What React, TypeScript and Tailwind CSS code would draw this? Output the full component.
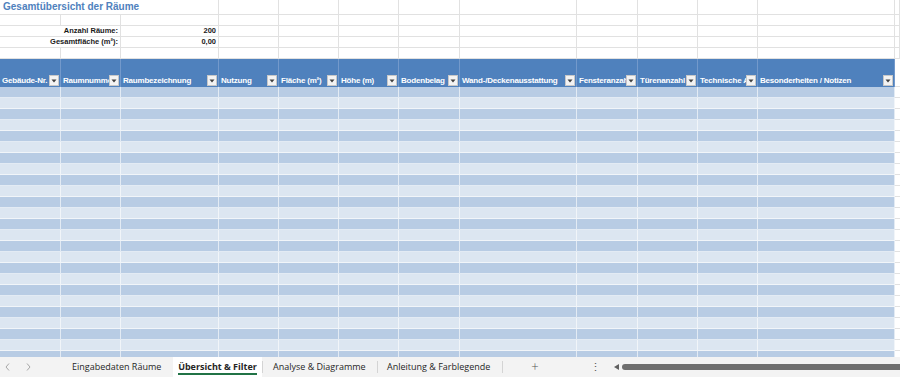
import React from 'react';

const cols = 'grid grid-cols-[61px_60px_98px_60px_60px_60px_61px_117px_61px_60px_60px_137px_5px]';

const headers = [
  'Gebäude-Nr.',
  'Raumnummer',
  'Raumbezeichnung',
  'Nutzung',
  'Fläche (m²)',
  'Höhe (m)',
  'Bodenbelag',
  'Wand-/Deckenausstattung',
  'Fensteranzahl',
  'Türenanzahl',
  'Technische Ausstattung',
  'Besonderheiten / Notizen',
];

function Blank({ span = '' }: { span?: string }) {
  return <div className={`border-r border-b border-[#e1e1e1] ${span}`} />;
}

function FilterButton() {
  return (
    <div className="shrink-0 w-[10px] h-[11px] mr-[1px] mb-[1px] bg-[#f3f3f3] border border-[#c8c8c8] flex items-center justify-center">
      <svg width="6" height="4" viewBox="0 0 6 4">
        <polygon points="0.5,0.5 5.5,0.5 3,3.5" fill="#404040" />
      </svg>
    </div>
  );
}

function Chevron({ dir }: { dir: 'left' | 'right' }) {
  return (
    <svg width="5" height="8" viewBox="0 0 5 8">
      <polyline
        points={dir === 'left' ? '4,0.5 1,4 4,7.5' : '1,0.5 4,4 1,7.5'}
        fill="none"
        stroke="#a6a6a6"
        strokeWidth="1"
      />
    </svg>
  );
}

export default function App() {
  const rows = Array.from({ length: 25 }, (_, i) => i);

  return (
    <div className="w-[900px] h-[377px] overflow-hidden bg-white flex flex-col font-['Liberation_Sans',Arial,sans-serif]">
      {/* Sheet */}
      <div className="flex-1 overflow-hidden">
        {/* Title row */}
        <div className={`${cols} h-[15px]`}>
          <div className="col-span-3 border-r border-b border-[#e1e1e1] pl-[3px] text-[10px] leading-[14px] font-bold text-[#4f81bd] whitespace-nowrap">
            Gesamtübersicht der Räume
          </div>
          {Array.from({ length: 10 }, (_, i) => (
            <Blank key={i} />
          ))}
        </div>
        <div className={`${cols} h-[11px]`}>
          {Array.from({ length: 13 }, (_, i) => (
            <Blank key={i} />
          ))}
        </div>
        {[
          ['Anzahl Räume:', '200'],
          ['Gesamtfläche (m²):', '0,00'],
        ].map(([label, value]) => (
          <div key={label} className={`${cols} h-[11px] text-[7.5px] leading-[10px] font-bold text-[#1a1a1a]`}>
            <div className="col-span-2 border-r border-b border-[#e1e1e1] text-right pr-[2px] whitespace-nowrap">{label}</div>
            <div className="border-r border-b border-[#e1e1e1] text-right pr-[2px]">{value}</div>
            {Array.from({ length: 10 }, (_, i) => (
              <Blank key={i} />
            ))}
          </div>
        ))}
        <div className={`${cols} h-[11px]`}>
          {Array.from({ length: 13 }, (_, i) => (
            <Blank key={i} />
          ))}
        </div>

        {/* Header row */}
        <div className={`${cols} h-[28px]`}>
          {headers.map((h) => (
            <div key={h} className="bg-[#4f81bd] border-r border-[#7399cb] flex items-end min-w-0">
              <span className="flex-1 min-w-0 overflow-hidden whitespace-nowrap pl-[2px] pb-[1px] text-[8px] leading-[10px] tracking-[-0.2px] font-bold text-white">
                {h}
              </span>
              <FilterButton />
            </div>
          ))}
          <div className="border-b border-[#e1e1e1]" />
        </div>

        {/* Data rows */}
        {rows.map((r) => (
          <div key={r} className={`${cols} h-[11px]`}>
            {headers.map((h) => (
              <div
                key={h}
                className={`border-r border-b border-white/60 ${r % 2 === 0 ? 'bg-[#b8cce4]' : 'bg-[#dce6f1]'}`}
              />
            ))}
            <div className="border-b border-[#e1e1e1]" />
          </div>
        ))}
      </div>

      {/* Sheet tabs */}
      <div className="h-[20px] shrink-0 bg-[#f3f3f3] flex items-stretch text-[9px] text-[#262626] font-['Open_Sans',sans-serif]">
        <div className="w-[63px] flex items-center">
          <span className="pl-[5px] w-[26px]">
            <Chevron dir="left" />
          </span>
          <Chevron dir="right" />
        </div>
        <div className="w-[110px] flex items-center pl-[9px]">Eingabedaten Räume</div>
        <div className="w-[89px] bg-white flex flex-col items-center justify-center font-bold">
          <span className="border-b-2 border-[#217346] leading-[13px] mt-[1px]">Übersicht &amp; Filter</span>
        </div>
        <div className="w-px my-[4px] bg-[#d4d4d4]" />
        <div className="w-[114px] flex items-center pl-[10px]">Analyse &amp; Diagramme</div>
        <div className="w-px my-[4px] bg-[#d4d4d4]" />
        <div className="w-[124px] flex items-center pl-[9px]">Anleitung &amp; Farblegende</div>
        <div className="w-px my-[4px] bg-[#d4d4d4]" />
        <div className="w-[64px] flex items-center justify-center text-[13px] text-[#555] font-light">+</div>
        <div className="w-[46px] flex items-center justify-end pr-[12px] text-[11px] text-[#555]">⋮</div>
        <div className="flex-1 flex items-center gap-[3px] pl-[1px]">
          <svg width="5" height="6" viewBox="0 0 5 6">
            <polygon points="5,0 5,6 0,3" fill="#606060" />
          </svg>
          <div className="flex-1 h-[6px] rounded-l-full bg-[#6e6e6e]" />
        </div>
      </div>
    </div>
  );
}
